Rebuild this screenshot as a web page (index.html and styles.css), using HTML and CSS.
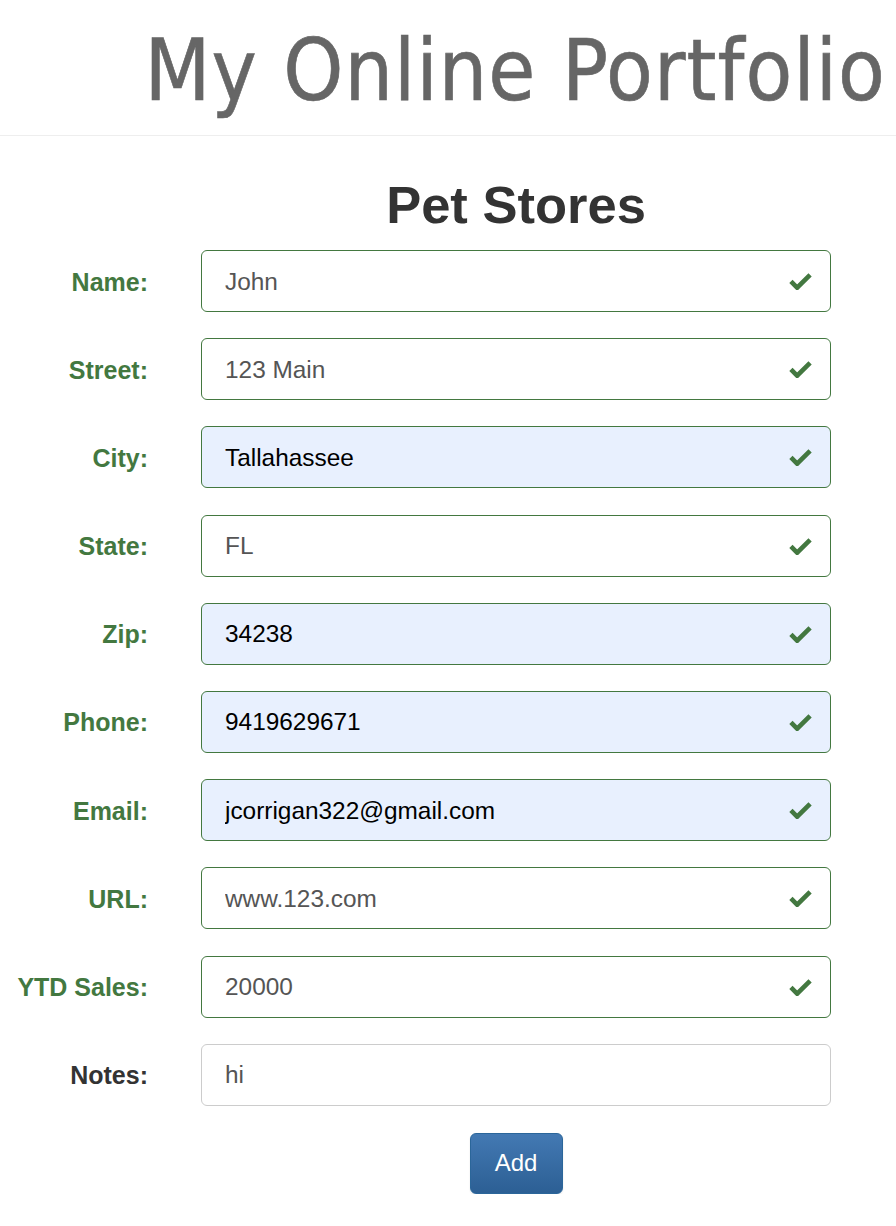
FILE: index.html
```html
<!DOCTYPE html>
<html>
<head>
<meta charset="utf-8">
<link rel="stylesheet" href="styles.css">
</head>
<body>
<header class="site-header">
  <h1 class="site-title">My Online Portfolio</h1>
</header>
<main class="page">
  <h2 class="page-title">Pet Stores</h2>
  <form class="form">
    <div class="row ok"><label class="label">Name:</label><div class="field"><input class="input" value="John"><svg class="check" viewBox="0 0 24 18"><path d="M2 9.5 L8.5 16 L22 2.5" fill="none" stroke="currentColor" stroke-width="4.8"/></svg></div></div>
    <div class="row ok"><label class="label">Street:</label><div class="field"><input class="input" value="123 Main"><svg class="check" viewBox="0 0 24 18"><path d="M2 9.5 L8.5 16 L22 2.5" fill="none" stroke="currentColor" stroke-width="4.8"/></svg></div></div>
    <div class="row ok"><label class="label">City:</label><div class="field"><input class="input auto" value="Tallahassee"><svg class="check" viewBox="0 0 24 18"><path d="M2 9.5 L8.5 16 L22 2.5" fill="none" stroke="currentColor" stroke-width="4.8"/></svg></div></div>
    <div class="row ok"><label class="label">State:</label><div class="field"><input class="input" value="FL"><svg class="check" viewBox="0 0 24 18"><path d="M2 9.5 L8.5 16 L22 2.5" fill="none" stroke="currentColor" stroke-width="4.8"/></svg></div></div>
    <div class="row ok"><label class="label">Zip:</label><div class="field"><input class="input auto" value="34238"><svg class="check" viewBox="0 0 24 18"><path d="M2 9.5 L8.5 16 L22 2.5" fill="none" stroke="currentColor" stroke-width="4.8"/></svg></div></div>
    <div class="row ok"><label class="label">Phone:</label><div class="field"><input class="input auto" value="9419629671"><svg class="check" viewBox="0 0 24 18"><path d="M2 9.5 L8.5 16 L22 2.5" fill="none" stroke="currentColor" stroke-width="4.8"/></svg></div></div>
    <div class="row ok"><label class="label">Email:</label><div class="field"><input class="input auto" value="jcorrigan322@gmail.com"><svg class="check" viewBox="0 0 24 18"><path d="M2 9.5 L8.5 16 L22 2.5" fill="none" stroke="currentColor" stroke-width="4.8"/></svg></div></div>
    <div class="row ok"><label class="label">URL:</label><div class="field"><input class="input" value="www.123.com"><svg class="check" viewBox="0 0 24 18"><path d="M2 9.5 L8.5 16 L22 2.5" fill="none" stroke="currentColor" stroke-width="4.8"/></svg></div></div>
    <div class="row ok"><label class="label">YTD Sales:</label><div class="field"><input class="input" value="20000"><svg class="check" viewBox="0 0 24 18"><path d="M2 9.5 L8.5 16 L22 2.5" fill="none" stroke="currentColor" stroke-width="4.8"/></svg></div></div>
    <div class="row"><label class="label">Notes:</label><div class="field"><input class="input plain" value="hi"></div></div>
    <div class="actions"><button type="button" class="btn">Add</button></div>
  </form>
</main>
</body>
</html>
```

FILE: styles.css
```css
html, body {
  margin: 0;
  padding: 0;
  background: #fff;
}
body {
  font-family: "Liberation Sans", Arial, sans-serif;
  color: #333;
}
.site-header {
  height: 136px;
  border-bottom: 1px solid #eee;
  box-sizing: border-box;
  display: flex;
  justify-content: flex-end;
  align-items: flex-start;
  padding-right: 10px;
}
.site-title {
  margin: 0;
  margin-top: 21px;
  font-family: "DejaVu Sans Condensed", "DejaVu Sans", sans-serif;
  font-stretch: condensed;
  font-weight: normal;
  font-size: 85px;
  letter-spacing: 1.1px;
  line-height: 100px;
  color: #666;
  white-space: nowrap;
  -webkit-text-stroke: 0.6px #666;
}
.page {
  width: 831px;
}
.page-title {
  margin: 41px 0 18px 201px;
  font-size: 52.5px;
  line-height: 55px;
  font-weight: bold;
  text-align: center;
  color: #333;
}
.form {
  display: flex;
  flex-direction: column;
  gap: 26.2px;
}
.row {
  display: flex;
  align-items: center;
  height: 62px;
}
.label {
  width: 148px;
  flex: none;
  text-align: right;
  font-size: 25px;
  font-weight: bold;
  color: #333;
  margin-right: 53px;
  transform: translateY(1px);
}
.row.ok .label {
  color: #437840;
}
.field {
  position: relative;
  width: 630px;
  height: 62px;
}
.input {
  box-sizing: border-box;
  width: 100%;
  height: 100%;
  border: 1px solid #437840;
  border-radius: 6px;
  padding: 1px 60px 0 23px;
  font-family: "Liberation Sans", Arial, sans-serif;
  font-size: 24.4px;
  color: #555;
  background: #fff;
  outline: none;
}
.input.auto {
  background: #e8f0fe;
  color: #000;
}
.input.plain {
  border-color: #ccc;
}
.check {
  position: absolute;
  right: 19px;
  top: 22px;
  width: 23px;
  height: 18px;
  color: #437840;
}
.actions {
  display: flex;
  justify-content: center;
  padding-left: 201px;
}
.btn {
  width: 93px;
  height: 61px;
  border: 1px solid #2b669a;
  border-radius: 6px;
  background: linear-gradient(#4379b3, #2c5f94);
  color: #fff;
  font-family: "Liberation Sans", Arial, sans-serif;
  font-size: 24px;
  box-shadow: 0 1px 2px rgba(0,0,0,0.1);
  margin-top: 1px;
}
```
